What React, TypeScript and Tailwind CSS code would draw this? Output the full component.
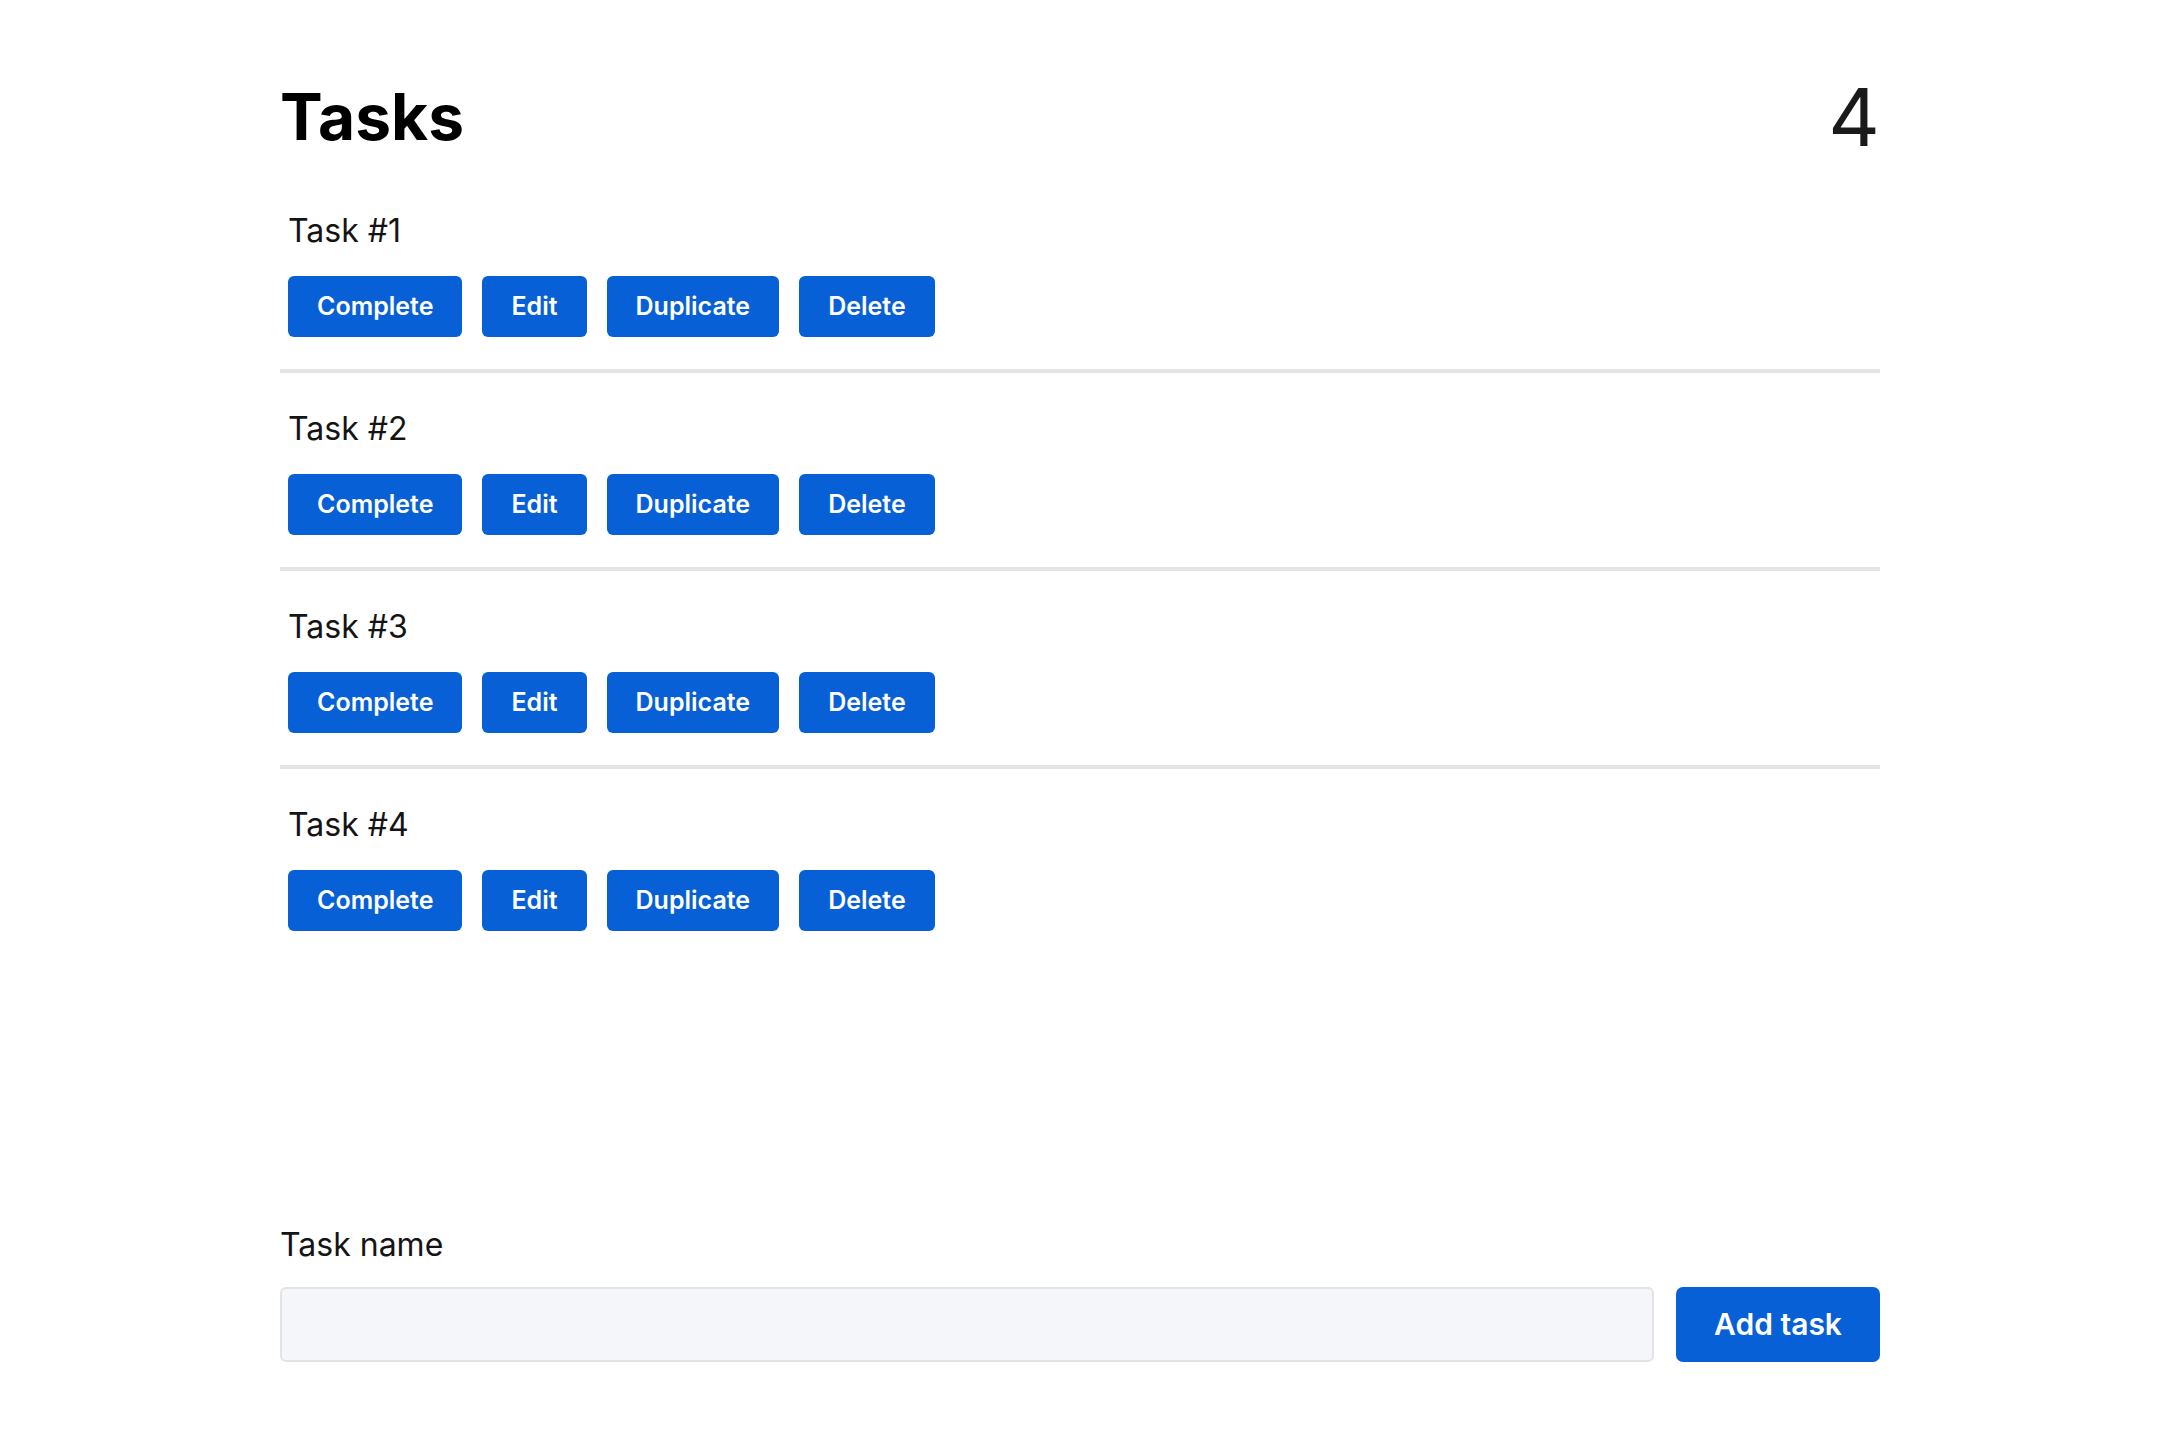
import { useState } from 'react';

const inter = "font-['Inter',sans-serif]";

const TaskRow = ({ name, last }: { name: string; last: boolean }) => (
  <li className={`pl-[8px] pt-[40px] pb-[32px] ${last ? '' : 'border-b-4 border-[#e4e4e4]'}`}>
    <p className={`${inter} text-[32px] leading-[32px] text-[#141414]`}>{name}</p>
    <div className="mt-[29px] flex gap-[20px]">
      {['Complete', 'Edit', 'Duplicate', 'Delete'].map((label) => (
        <button
          key={label}
          className={`${inter} h-[61px] px-[29px] rounded-[6px] bg-[#0760d6] text-white text-[25px] font-semibold`}
        >
          {label}
        </button>
      ))}
    </div>
  </li>
);

export default function App() {
  const [tasks] = useState(['Task #1', 'Task #2', 'Task #3', 'Task #4']);
  const [value, setValue] = useState('');

  return (
    <div className={`${inter} h-screen bg-white flex flex-col`}>
      <div className="w-[1600px] mx-auto flex flex-col flex-1 pt-[77px] pb-[78px]">
        <header className="flex items-center justify-between mb-[18px]">
          <h1 className="text-[64px] leading-[64px] font-bold text-black">Tasks</h1>
          <span className="font-normal text-[80px] leading-[80px] text-[#1a1a1a]">{tasks.length}</span>
        </header>

        <ul>
          {tasks.map((t, i) => (
            <TaskRow key={t} name={t} last={i === tasks.length - 1} />
          ))}
        </ul>

        <form className="mt-auto" onSubmit={(e) => e.preventDefault()}>
          <label className="block text-[32px] leading-[32px] text-[#141414]">Task name</label>
          <div className="mt-[26px] flex gap-[22px]">
            <input
              value={value}
              onChange={(e) => setValue(e.target.value)}
              className="flex-1 h-[75px] rounded-[6px] border-2 border-[#e1e3e6] bg-[#f4f6f9] px-4 text-[28px] outline-none"
            />
            <button className="w-[204px] h-[75px] rounded-[7px] bg-[#0760d6] text-white text-[30px] font-semibold">
              Add task
            </button>
          </div>
        </form>
      </div>
    </div>
  );
}
